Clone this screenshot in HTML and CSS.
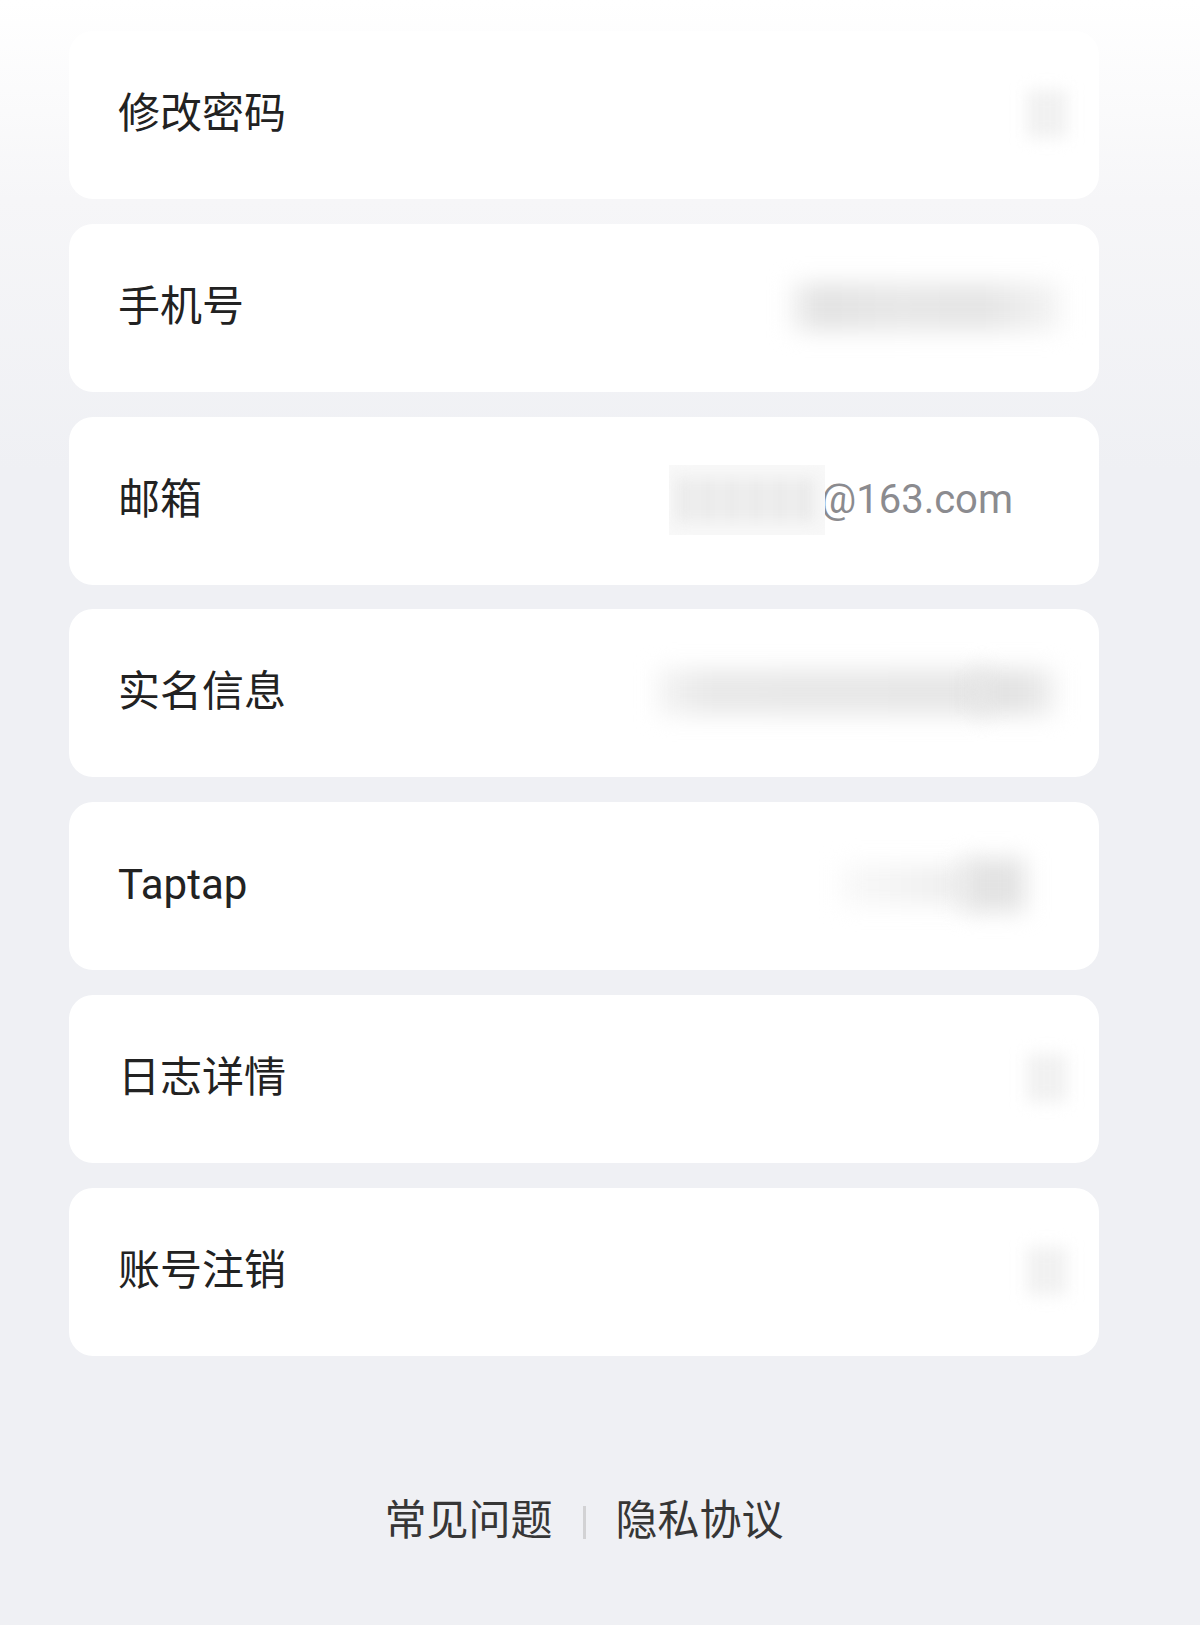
FILE: index.html
```html
<!DOCTYPE html>
<html lang="zh-CN">
    <head>
        <meta charset="UTF-8">
        <meta name="viewport" content="width=device-width, initial-scale=1.0">
        <title>账号与安全</title>
        <link rel="stylesheet" href="styles.css">
    </head>
    <body>
        <div class="page">
            <div class="list">
                <div class="item">
                    <span class="label">修改密码</span>
                    <span class="arrow"><span class="smear"></span></span>
                </div>
                <div class="item">
                    <span class="label">手机号</span>
                    <span class="hidden hidden-phone"><span class="smear"></span></span>
                </div>
                <div class="item">
                    <span class="label">邮箱</span>
                    <span class="email">
                        <span class="email-mask"><span class="smear"></span></span>
                        <span class="value">@163.com</span>
                    </span>
                </div>
                <div class="item">
                    <span class="label">实名信息</span>
                    <span class="hidden hidden-name"><span class="smear"></span><span class="smear dark"></span></span>
                </div>
                <div class="item">
                    <span class="label">Taptap</span>
                    <span class="hidden hidden-tap"><span class="smear"></span><span class="smear dark"></span></span>
                </div>
                <div class="item">
                    <span class="label">日志详情</span>
                    <span class="arrow"><span class="smear"></span></span>
                </div>
                <div class="item">
                    <span class="label">账号注销</span>
                    <span class="arrow"><span class="smear"></span></span>
                </div>
            </div>

            <div class="footer">
                <a class="link">常见问题</a>
                <span class="sep"></span>
                <a class="link">隐私协议</a>
            </div>
        </div>
    </body>
</html>
```

FILE: styles.css
```css
html, body{
    margin: 0;
    padding: 0;
}
body{
    min-height: 1625px;
    background: linear-gradient(#ffffff 0, #f6f6f8 200px, #eff0f4 470px, #eff0f4 100%);
    font-family: Roboto, "Noto Sans CJK SC", sans-serif;
    color: #222222;
}
.page{
    width: 1030px;
    margin-left: 69px;
    padding-top: 31px;
}
.list{
    display: flex;
    flex-direction: column;
    gap: 24.8px;
}
.item{
    height: 168px;
    background-color: #ffffff;
    border-radius: 24px;
    display: flex;
    align-items: center;
    justify-content: space-between;
    padding: 0 27px 0 49px;
}
.label{
    font-size: 42px;
    line-height: 60px;
    margin-top: -2px;
}

/* blurred values */
.arrow{
    width: 50px;
    height: 64px;
    display: flex;
    align-items: center;
    justify-content: center;
    margin-top: -2px;
}
.arrow .smear{
    width: 40px;
    height: 48px;
    background-color: #f1f1f1;
    filter: blur(8px);
}
.hidden{
    display: flex;
    align-items: center;
    margin-top: -2px;
}
.smear{
    display: block;
    background-color: #e6e6e6;
    filter: blur(9px);
}
.hidden-phone{
    width: 293px;
    height: 66px;
    justify-content: center;
}
.hidden-phone .smear{
    width: 270px;
    height: 48px;
    background: linear-gradient(90deg, #f2f2f2, #e3e3e3 10%, #e8e8e8 40%, #e5e5e5 70%, #eeeeee 88%, #f5f5f5);
    filter: blur(11px);
}
.hidden-name{
    width: 430px;
    height: 67px;
    justify-content: center;
}
.hidden-name .smear{
    width: 330px;
    height: 46px;
    background: linear-gradient(90deg, #f4f4f4, #e9e9e9 15%, #e8e8e8 60%, #e6e6e6);
    filter: blur(11px);
}
.hidden-name .smear.dark{
    width: 80px;
    background: linear-gradient(90deg, #e2e2e2, #e4e4e4 60%, #f2f2f2);
    margin-left: -12px;
}
.hidden-tap{
    width: 192px;
    height: 72px;
    margin-right: 39px;
}
.hidden-tap .smear{
    width: 130px;
    height: 40px;
    margin-left: 0;
    background: linear-gradient(90deg, #f9f9f9, #ededed);
    filter: blur(11px);
}
.hidden-tap .smear.dark{
    width: 62px;
    height: 54px;
    margin-left: -8px;
    background: #e3e3e3;
    filter: blur(11px);
}

/* email */
.email{
    display: flex;
    align-items: center;
    margin-right: 59px;
    margin-top: -2px;
}
.email-mask{
    position: relative;
    z-index: 1;
    width: 156px;
    height: 70px;
    overflow: hidden;
    background-color: #f8f8f8;
    display: flex;
    align-items: center;
    justify-content: center;
    margin-right: -5px;
}
.email-mask .smear{
    width: 140px;
    height: 44px;
    background: repeating-linear-gradient(90deg, #e9e9e9 0, #e9e9e9 14px, #f1f1f1 14px, #f1f1f1 24px);
    filter: blur(7px);
}
.value{
    font-size: 40px;
    line-height: 60px;
    color: #8b8b8f;
}

/* footer */
.footer{
    margin-top: 135px;
    display: flex;
    align-items: center;
    justify-content: center;
    gap: 30px;
}
.link{
    font-size: 42px;
    line-height: 60px;
    color: #363636;
}
.sep{
    width: 3px;
    height: 33px;
    background-color: #d2d2d4;
    margin-top: 4px;
}
```
